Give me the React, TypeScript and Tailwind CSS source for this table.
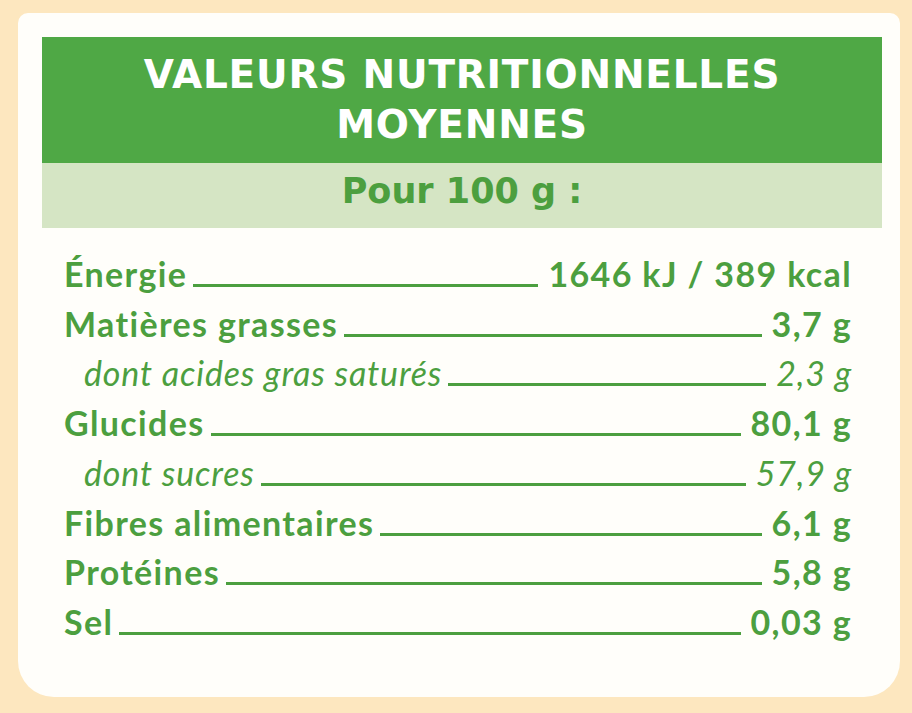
import React from "react";

type Row = { label: string; value: string; sub?: boolean };

const rows: Row[] = [
  { label: "Énergie", value: "1646 kJ / 389 kcal" },
  { label: "Matières grasses", value: "3,7 g" },
  { label: "dont acides gras saturés", value: "2,3 g", sub: true },
  { label: "Glucides", value: "80,1 g" },
  { label: "dont sucres", value: "57,9 g", sub: true },
  { label: "Fibres alimentaires", value: "6,1 g" },
  { label: "Protéines", value: "5,8 g" },
  { label: "Sel", value: "0,03 g" },
];

export default function App() {
  return (
    <div className="w-[912px] h-[713px] bg-[#fde7bf] pt-[13px] pl-[18px] overflow-hidden">
      <div className="w-[882px] h-[684px] bg-[#fffefa] rounded-t-[10px] rounded-b-[36px] pt-[24px] pl-[24px] pr-[18px] font-['Lato',sans-serif]">
        <div className="h-[126px] bg-[#4fa845] flex flex-col items-center justify-center text-white font-bold text-[39px] leading-[50px] tracking-[0.02em] font-['DejaVu_Sans',sans-serif]">
          <div>VALEURS NUTRITIONNELLES</div>
          <div>MOYENNES</div>
        </div>
        <div className="h-[65px] bg-[#d5e5c4] flex items-center justify-center pb-[8px] text-[#4c9f3f] font-bold text-[35px] font-['DejaVu_Sans',sans-serif]">
          Pour 100 g :
        </div>
        <div className="pt-[21px] pl-[22px] pr-[30px] text-[#4c9f3f]">
          {rows.map((r) => (
            <div
              key={r.label}
              className={
                r.sub
                  ? "flex items-baseline leading-[49.7px] text-[34px] italic font-normal tracking-[0.025em] pl-[20px]"
                  : "flex items-baseline leading-[49.7px] text-[34px] font-bold tracking-[0.04em]"
              }
            >
              <span className="whitespace-nowrap">{r.label}</span>
              <div className="flex-1 h-[3px] bg-[#4c9f3f] ml-[6px] mr-[10px] mb-[1px] min-w-[10px]" />
              <span className="whitespace-nowrap">{r.value}</span>
            </div>
          ))}
        </div>
      </div>
    </div>
  );
}
